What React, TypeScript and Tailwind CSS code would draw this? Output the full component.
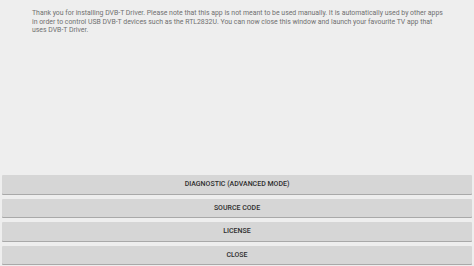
const buttons = ['Diagnostic (advanced mode)', 'Source code', 'License', 'Close']

export default function App() {
  return (
    <div
      className="flex h-[266px] w-[474px] flex-col bg-[#eeeeee]"
      style={{ fontFamily: 'Roboto, "Liberation Sans", sans-serif' }}
    >
      <div className="flex-1 pl-[32px] pr-[26px] pt-[9px]">
        <p className="text-[6.9px] leading-[8.7px] text-[#707070]">
          Thank you for installing DVB-T Driver. Please note that this app is not meant to be used
          manually. It is automatically used by other apps in order to control USB DVB-T devices
          such as the RTL2832U. You can now close this window and launch your favourite TV app that
          uses DVB-T Driver.
        </p>
      </div>
      <div className="flex flex-col gap-[5px] px-[2px] pb-[2px]">
        {buttons.map((b) => (
          <button
            key={b}
            className="flex h-[18.5px] items-center justify-center rounded-[1px] bg-[#d6d6d6] text-[7px] font-medium uppercase text-[#2e2e2e] shadow-[0_1px_0_#a9a9a9]"
          >
            {b}
          </button>
        ))}
      </div>
    </div>
  )
}
